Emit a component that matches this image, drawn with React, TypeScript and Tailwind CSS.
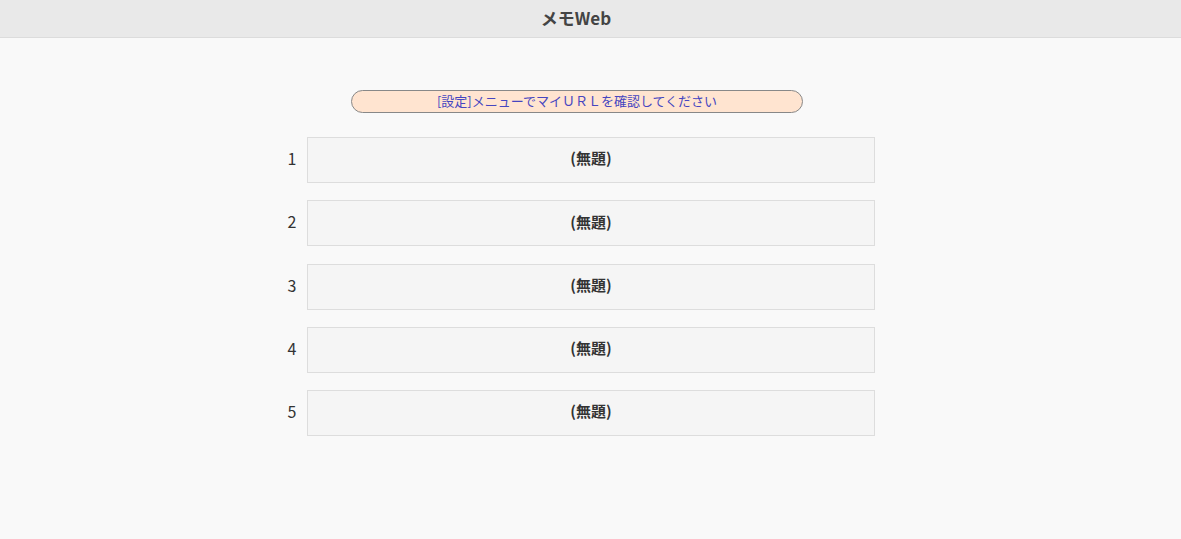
import React from "react";

export default function App() {
  const items = [1, 2, 3, 4, 5];
  return (
    <div
      className="min-h-[539px] w-full bg-[#f9f9f9] text-[#333]"
      style={{ fontFamily: '"Noto Sans CJK JP", "Noto Sans", sans-serif' }}
    >
      <div className="flex h-[38px] w-full border-b border-[#dcdcdc] bg-[#e9e9e9]">
        <div className="flex w-[1152px] items-center justify-center pb-[3px]">
          <h1 className="text-[17px] font-bold leading-none text-[#444]">メモWeb</h1>
        </div>
      </div>
      <div className="flex w-[1152px] flex-col items-center pt-[52px]">
        <div className="ml-[2px] flex h-[23px] w-[452px] items-center justify-center rounded-full border border-[#888] bg-[#ffe4d0] pb-[3px] text-[13px] leading-none text-[#4646c0]">
          [設定]メニューでマイＵＲＬを確認してください
        </div>
        <div className="mt-[24px] flex flex-col gap-[17.25px]">
          {items.map((n) => (
            <div key={n} className="flex items-center">
              <div className="w-[30px] pb-[4px] text-center text-[16px] leading-none text-[#333]">{n}</div>
              <div className="flex h-[46px] w-[568px] items-center justify-center border border-[#dddddd] bg-[#f5f5f5] pb-[3px] text-[15px] font-bold text-[#333]">
                (無題)
              </div>
            </div>
          ))}
        </div>
      </div>
    </div>
  );
}
